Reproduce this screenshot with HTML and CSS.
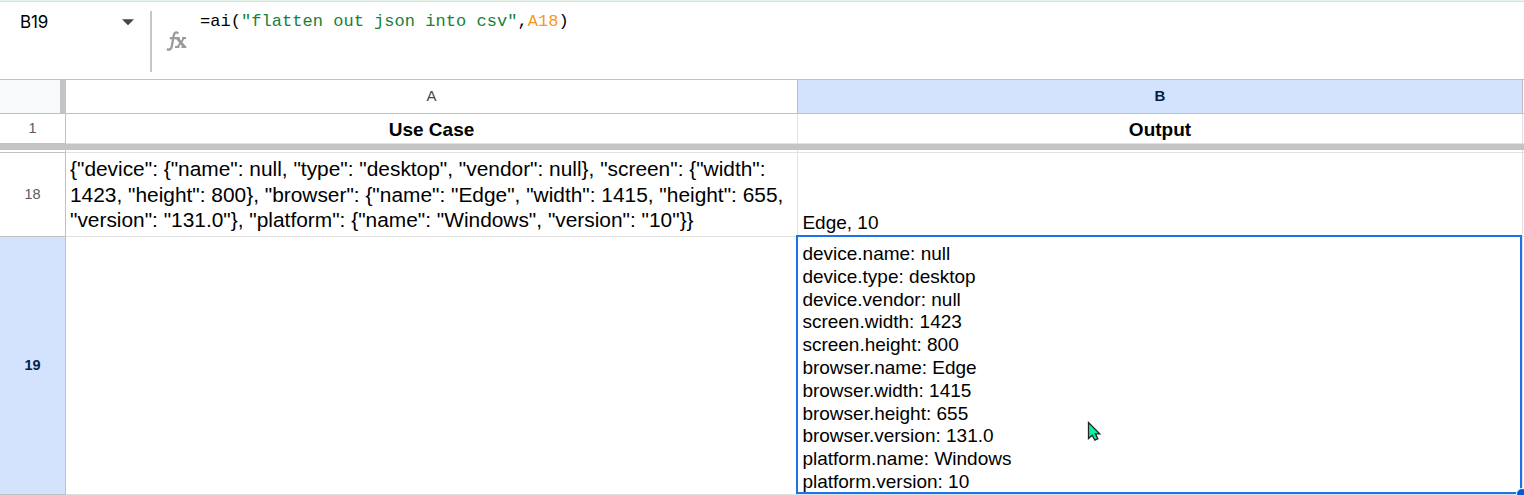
FILE: index.html
```html
<!DOCTYPE html>
<html lang="en">
<head>
<meta charset="utf-8">
<title>Spreadsheet</title>
<link rel="stylesheet" href="styles.css">
</head>
<body>
<div class="app">
  <header class="formula-bar">
    <div class="name-box"><span class="cell-name">B19</span>
      <svg class="caret" width="12" height="7" viewBox="0 0 12 7"><path d="M0 .3h12L6 6.3z" fill="#444746"/></svg>
    </div>
    <div class="divider"></div>
    <svg class="fx" width="21" height="21" viewBox="0 0 21 21" fill="none" stroke="#999b9d">
      <path d="M12.3 2.5C9.7.2 8.1 2 7.6 5L5.8 15.2C5.3 18.3 3.3 19.5 1 18M3.8 7.2h6.7" stroke-width="2.3"/>
      <path d="M11.2 7L18.5 16" stroke-width="2.8"/>
      <path d="M18.2 7L11.5 16M9.8 7h4M16 7h4M9 16h4.5M15.5 16h4.8" stroke-width="2"/>
    </svg>
    <code class="formula">=ai(<span class="str">"flatten out json into csv"</span>,<span class="ref">A18</span>)</code>
  </header>
  <main class="grid">
    <div class="corner"></div>
    <div class="col-head">A</div>
    <div class="col-head selected">B</div>
    <div class="edge strong"></div>

    <div class="row-head">1</div>
    <div class="cell title">Use Case</div>
    <div class="cell title">Output</div>
    <div class="edge"></div>

    <div class="freeze"></div>

    <div class="row-head gap"></div>
    <div class="cell"></div>
    <div class="cell"></div>
    <div class="edge"></div>

    <div class="row-head">18</div>
    <div class="cell json">{"device": {"name": null, "type": "desktop", "vendor": null}, "screen": {"width":<br>1423, "height": 800}, "browser": {"name": "Edge", "width": 1415, "height": 655,<br>"version": "131.0"}, "platform": {"name": "Windows", "version": "10"}}</div>
    <div class="cell short">Edge, 10</div>
    <div class="edge"></div>

    <div class="row-head selected">19</div>
    <div class="cell"></div>
    <div class="cell output">device.name: null<br>device.type: desktop<br>device.vendor: null<br>screen.width: 1423<br>screen.height: 800<br>browser.name: Edge<br>browser.width: 1415<br>browser.height: 655<br>browser.version: 131.0<br>platform.name: Windows<br>platform.version: 10
      <span class="selection"></span><span class="handle"></span>
    </div>
    <div class="edge"></div>
  </main>
  <svg class="pointer" width="16" height="22" viewBox="0 0 16 22"><path d="M1.5 1.5v16l3.7-3.3 2.7 5 3-1.5-2.5-4.9h4.3z" fill="#0cf0a0" stroke="#222" stroke-width="1.3"/></svg>
</div>
</body>
</html>
```
FILE: styles.css
```css
* { box-sizing: border-box; }
body { margin: 0; background: #fff; }
.app {
  position: relative;
  width: 1524px;
  height: 495px;
  overflow: hidden;
  font-family: "Liberation Sans", Arial, sans-serif;
  color: #000;
}
.formula-bar {
  display: flex;
  height: 80px;
  border-top: 1px solid #e6f4ea;
  border-bottom: 1px solid #c0c0c0;
  box-shadow: inset 0 1px #d9dfdc;
}
.name-box {
  display: flex;
  justify-content: space-between;
  width: 150px;
  padding: 10px 16px 0 20px;
}
.cell-name { padding-top: 1px; font: 17px/21px Inter, sans-serif; letter-spacing: -.2px; }
.caret { margin-top: 8px; }
.divider { width: 2px; height: 61px; margin-top: 10px; background: #c7c7c7; }
.fx { margin: 30px 0 0 14px; }
.formula {
  margin: 11px 0 0 13px;
  font: 17px/20px "Liberation Mono", monospace;
  letter-spacing: .04px;
  white-space: pre;
}
.str { color: #188038; }
.ref { color: #f7981d; }
.grid {
  display: grid;
  grid-template-columns: 66px 732px 725px 1px;
  grid-template-rows: 34px 30px 6px 3px 84px 258px;
}
.corner {
  background: #f8f9fb;
  border-right: 6px solid #c4c4c4;
  border-bottom: 1px solid #c0c0c0;
}
.col-head {
  border-right: 1px solid #c0c0c0;
  border-bottom: 1px solid #c0c0c0;
  font-size: 15px;
  line-height: 32px;
  text-align: center;
  color: #444746;
}
.row-head {
  display: flex;
  align-items: center;
  justify-content: center;
  padding-bottom: 1px;
  border-right: 1px solid #c0c0c0;
  border-bottom: 1px solid #c0c0c0;
  font-size: 14.5px;
  line-height: 20px;
  color: #575b5f;
}
.gap { padding: 0; }
.selected { background: #d3e3fd; color: #041e49; font-weight: 700; }
.cell { border-right: 1px solid #e1e1e1; border-bottom: 1px solid #e1e1e1; }
.edge { border-bottom: 1px solid #e1e1e1; }
.strong { border-color: #c0c0c0; }
.title { text-align: center; font-size: 19px; font-weight: 700; line-height: 32px; }
.freeze { grid-column: 1 / -1; background: #c4c4c4; }
.json { padding: 3px 0 0 4px; font-size: 20.88px; line-height: 25.5px; white-space: nowrap; }
.short { padding: 58px 0 0 4.4px; font-size: 19px; line-height: 23px; }
.output { position: relative; padding: 6px 0 0 4.4px; font-size: 19px; line-height: 22.8px; }
.selection {
  position: absolute;
  inset: -2px 0 0 -2px;
  border: 2px solid #1a73e8;
}
.handle {
  position: absolute;
  right: -6px;
  bottom: -6px;
  width: 12px;
  height: 12px;
  border: 1px solid #fff;
  border-radius: 50%;
  background: #0b57d0;
}
.pointer { position: absolute; left: 1087px; top: 421px; }
```
